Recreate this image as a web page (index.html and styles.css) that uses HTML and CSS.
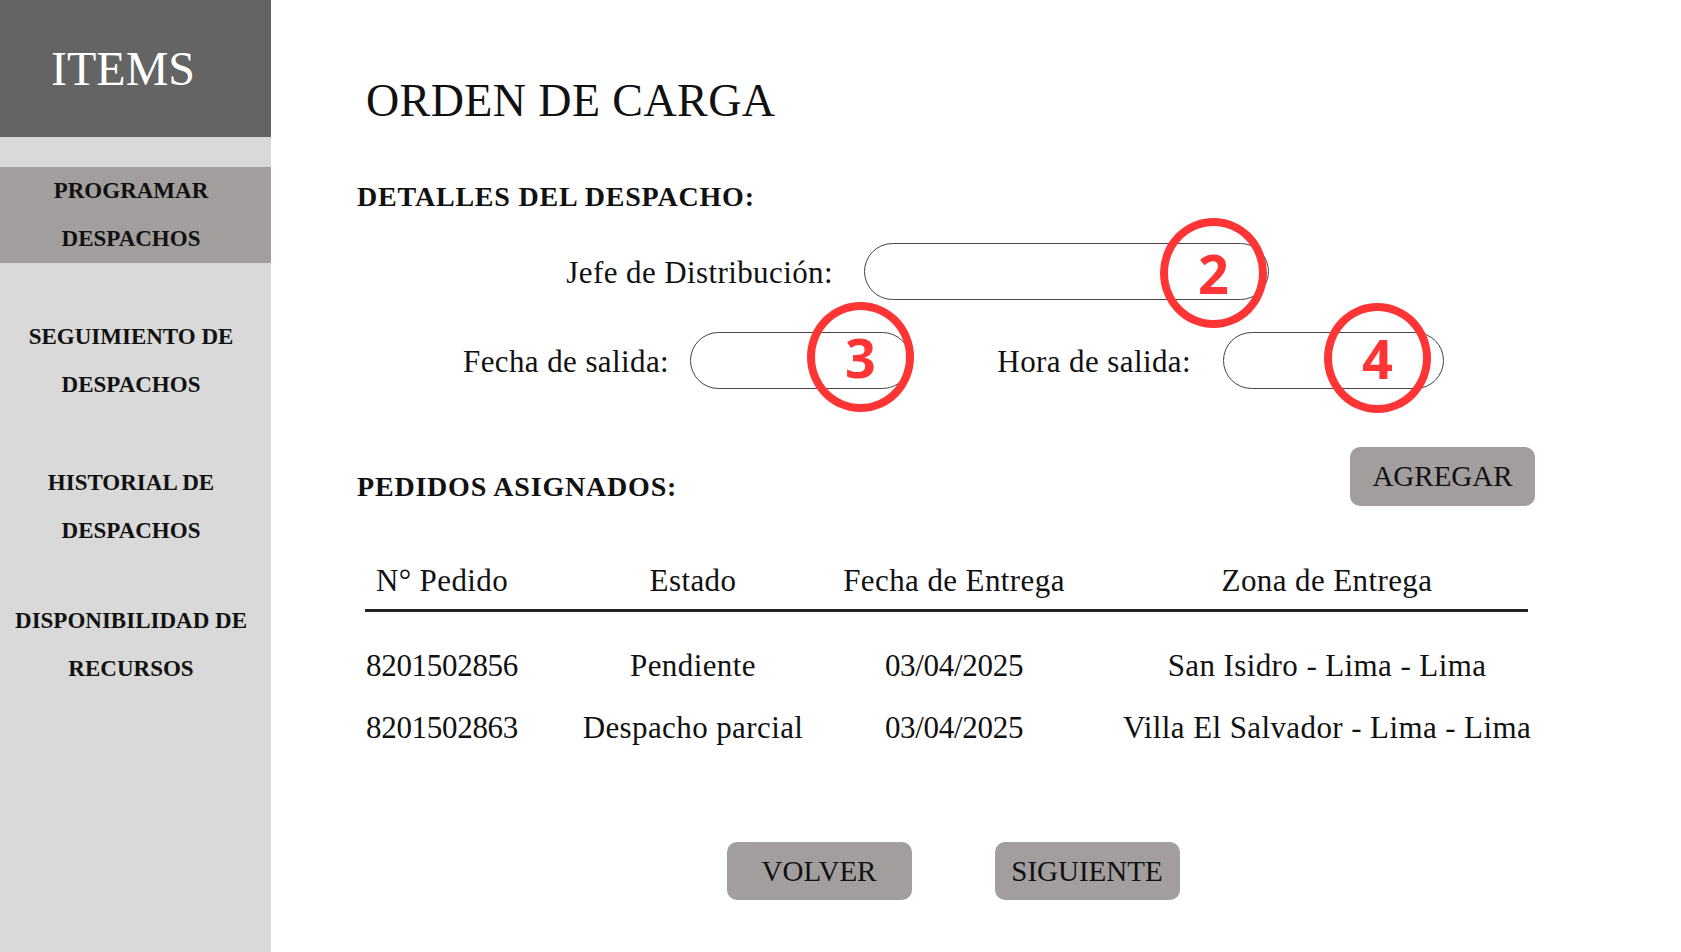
FILE: index.html
```html
<!DOCTYPE html>
<html lang="es">
<head>
    <meta charset="UTF-8">
    <meta name="viewport" content="width=device-width, initial-scale=1.0">
    <title>Orden de Carga</title>
    <link rel="stylesheet" href="styles.css">
</head>
<body>
    <aside class="sidebar">
        <div class="brand">ITEMS</div>
        <nav class="menu">
            <a class="menu-item active">PROGRAMAR<br>DESPACHOS</a>
            <a class="menu-item">SEGUIMIENTO DE<br>DESPACHOS</a>
            <a class="menu-item">HISTORIAL DE<br>DESPACHOS</a>
            <a class="menu-item">DISPONIBILIDAD DE<br>RECURSOS</a>
        </nav>
    </aside>

    <main class="content">
        <h1 class="title">ORDEN DE CARGA</h1>

        <h2 class="section-title">DETALLES DEL DESPACHO:</h2>

        <div class="form-row row-jefe">
            <label class="label label-jefe">Jefe de Distribución:</label>
            <div class="field field-jefe">
                <input type="text" class="pill">
                <span class="mark mark-2">2</span>
            </div>
        </div>

        <div class="form-row row-fechas">
            <label class="label label-fecha">Fecha de salida:</label>
            <div class="field field-small">
                <input type="text" class="pill">
                <span class="mark mark-3">3</span>
            </div>
            <label class="label label-hora">Hora de salida:</label>
            <div class="field field-small">
                <input type="text" class="pill">
                <span class="mark mark-4">4</span>
            </div>
        </div>

        <div class="pedidos-head">
            <h2 class="section-title">PEDIDOS ASIGNADOS:</h2>
            <button class="btn btn-add">AGREGAR</button>
        </div>

        <div class="orders">
            <div class="orders-row orders-header">
                <span>N° Pedido</span>
                <span>Estado</span>
                <span>Fecha de Entrega</span>
                <span>Zona de Entrega</span>
            </div>
            <div class="orders-body">
                <div class="orders-row">
                    <span class="num">8201502856</span>
                    <span>Pendiente</span>
                    <span class="num">03/04/2025</span>
                    <span>San Isidro - Lima - Lima</span>
                </div>
                <div class="orders-row">
                    <span class="num">8201502863</span>
                    <span>Despacho parcial</span>
                    <span class="num">03/04/2025</span>
                    <span>Villa El Salvador - Lima - Lima</span>
                </div>
            </div>
        </div>

        <div class="actions">
            <button class="btn">VOLVER</button>
            <button class="btn">SIGUIENTE</button>
        </div>
    </main>
</body>
</html>
```

FILE: styles.css
```css
body {
    margin: 0;
    display: flex;
    height: 952px;
    overflow: hidden;
    font-family: "Liberation Serif", "Times New Roman", serif;
    color: #111;
    background: #fff;
}

/* barra lateral */
.sidebar {
    width: 271px;
    flex-shrink: 0;
    background: #d9d9d9;
}

.brand {
    height: 137px;
    background: #646464;
    color: #fff;
    font-size: 48px;
    display: flex;
    align-items: center;
    justify-content: center;
    padding-right: 25px;
    box-sizing: border-box;
}

.menu {
    margin-top: 30px;
    display: flex;
    flex-direction: column;
    gap: 50px;
}

.menu-item {
    display: block;
    font-size: 23px;
    font-weight: bold;
    line-height: 48px;
    text-align: center;
    padding-right: 9px;
    color: #111;
}

.menu-item:last-child {
    margin-top: -8px;
}

.menu-item.active {
    background: #a29e9e;
}

/* contenido */
.content {
    flex: 1;
    padding: 73px 0 0 86px;
}

.title {
    margin: 0 0 0 9px;
    font-size: 46px;
    font-weight: normal;
    line-height: 56px;
    letter-spacing: 0.4px;
}

.section-title {
    margin: 0;
    font-size: 28px;
    font-weight: bold;
    line-height: 36px;
    letter-spacing: 0.8px;
}

.content > .section-title {
    margin-top: 50px;
}

.form-row {
    display: flex;
    align-items: center;
    height: 57px;
}

.row-jefe {
    margin-top: 28px;
    padding-left: 209px;
}

.row-fechas {
    margin-top: 32px;
    padding-left: 106px;
}

.label {
    font-size: 31px;
    letter-spacing: 0.4px;
    text-align: right;
    white-space: nowrap;
    padding-top: 3px;
}

.label-jefe { width: 267px; margin-right: 31px; }
.label-fecha { width: 206px; margin-right: 21px; }
.label-hora { width: 194px; margin-left: 86px; margin-right: 32px; }

.field {
    position: relative;
    height: 57px;
}

.field-jefe { width: 405px; }
.field-small { width: 221px; }

.pill {
    width: 100%;
    height: 100%;
    box-sizing: border-box;
    border: 1.5px solid #444;
    border-radius: 30px;
    background: #fff;
    outline: none;
}

/* marcas de anotación */
.mark {
    position: absolute;
    width: 107px;
    height: 110px;
    box-sizing: border-box;
    border: 8px solid #ff3434;
    border-radius: 50%;
    display: flex;
    align-items: center;
    justify-content: center;
    font-family: "Open Sans", "Noto Sans", sans-serif;
    font-weight: bold;
    font-size: 54px;
    color: #ff3434;
    line-height: 1;
}

.mark-2 { left: 296px; top: -25px; }
.mark-3 { left: 117px; top: -30px; }
.mark-4 { left: 101px; top: -29px; }

.pedidos-head {
    margin-top: 58px;
    width: 1178px;
    display: flex;
    justify-content: space-between;
    align-items: flex-end;
}

.pedidos-head .section-title {
    margin-bottom: 1px;
}

.btn {
    width: 185px;
    height: 58px;
    border: none;
    border-radius: 10px;
    background: #a29e9e;
    color: #111;
    font-family: "Liberation Serif", "Times New Roman", serif;
    font-size: 29px;
    cursor: pointer;
}

.btn-add {
    height: 59px;
}

/* tabla de pedidos */
.orders {
    margin: 55px 0 0 8px;
    width: 1163px;
}

.orders-row {
    display: grid;
    grid-template-columns: 154px 178px 174px 402px;
    column-gap: 85px;
    justify-items: center;
    font-size: 31px;
    letter-spacing: 0.4px;
    line-height: 62px;
    white-space: nowrap;
}

.orders-row .num {
    letter-spacing: -0.3px;
}

.orders-header {
    line-height: 40px;
    padding-bottom: 8px;
    border-bottom: 3px solid #222;
}

.orders-body {
    margin-top: 23px;
}

.actions {
    margin-top: 83px;
    width: 1163px;
    padding-left: 13px;
    margin-left: 8px;
    box-sizing: border-box;
    display: flex;
    justify-content: center;
    gap: 83px;
}
```
